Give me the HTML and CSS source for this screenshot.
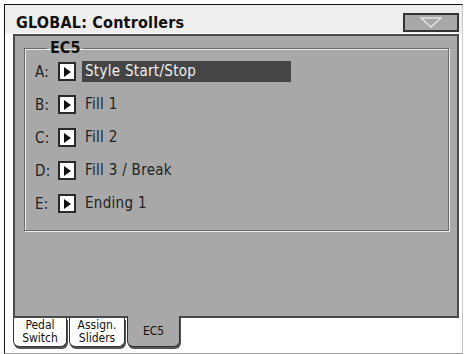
FILE: index.html
```html
<!DOCTYPE html>
<html>
<head>
<meta charset="utf-8">
<link rel="stylesheet" href="styles.css">
</head>
<body>
<div class="window">
  <div class="titlebar">
    <span class="title">GLOBAL: Controllers</span>
    <button class="menu-btn" aria-label="menu">
      <svg width="22" height="11" viewBox="0 0 22 11"><path d="M1 1 L21 1 L11 10 Z" fill="none" stroke="#e4e4e4" stroke-width="1.5"/></svg>
    </button>
  </div>
  <div class="panel">
    <fieldset class="group">
      <legend>EC5</legend>
      <div class="row"><span class="lbl">A:</span><span class="arrow"></span><span class="val sel">Style Start/Stop</span></div>
      <div class="row"><span class="lbl">B:</span><span class="arrow"></span><span class="val">Fill 1</span></div>
      <div class="row"><span class="lbl">C:</span><span class="arrow"></span><span class="val">Fill 2</span></div>
      <div class="row"><span class="lbl">D:</span><span class="arrow"></span><span class="val">Fill 3 / Break</span></div>
      <div class="row"><span class="lbl">E:</span><span class="arrow"></span><span class="val">Ending 1</span></div>
    </fieldset>
  </div>
  <div class="tabs">
    <div class="tab tab-pedal"><span class="tline">Pedal</span><span class="tline">Switch</span></div>
    <div class="tab tab-assign"><span class="tline">Assign.</span><span class="tline">Sliders</span></div>
    <div class="tab tab-ec5 active">EC5</div>
  </div>
</div>
</body>
</html>
```
FILE: styles.css
```css
* { box-sizing: border-box; }
html, body { margin: 0; padding: 0; background: #fff; }
body { width: 465px; height: 354px; overflow: hidden; font-family: "DejaVu Sans Condensed", "DejaVu Sans", sans-serif; color: #222; }

.window {
  margin: 4px 0 0 4px;
  width: 459px;
  height: 350px;
  border-top: 1px solid #111;
  border-left: 1px solid #111;
  border-right: 1px solid #c8c8c8;
  border-bottom: 1px solid #999;
  background: #fff;
  display: flex;
  flex-direction: column;
}

.titlebar {
  height: 28px;
  background: #eeeeee;
  display: flex;
  justify-content: space-between;
  align-items: flex-start;
  padding: 0 3px 0 11px;
}
.title {
  font-weight: bold;
  font-size: 16px;
  line-height: 16px;
  margin-top: 10px;
  color: #111;
  letter-spacing: 0.2px;
}
.menu-btn {
  margin-top: 8px;
  width: 56px;
  height: 19px;
  padding: 0;
  border: 2px solid #333;
  background: #a8a8a8;
  display: flex;
  align-items: center;
  justify-content: center;
}
.menu-btn svg { display: block; }

.panel {
  margin: 1px 3px 0 8px;
  height: 284px;
  background: #a8a8a8;
  border: 2px solid #4a4a4a;
  box-shadow: -1px -1px 0 #fff;
  padding: 0 8px 0 9px;
}

.group {
  margin: 5px 0 0 0;
  padding: 0 0 10px 10px;
  border: 1px solid #6a6a6a;
  box-shadow: inset 1px 1px 0 #ececec, 1px 1px 0 #ececec;
  min-width: 0;
}
.group legend {
  margin-left: 12px;
  padding: 0 3px;
  font-weight: bold;
  font-size: 16px;
  line-height: 14px;
  color: #111;
}

.row {
  height: 33px;
  display: flex;
  align-items: center;
  font-size: 15px;
  letter-spacing: 0.3px;
}
.lbl { width: 23px; color: #222; }
.arrow {
  width: 18px;
  height: 19px;
  border: 2px solid #2a2a2a;
  background: #fff;
  flex: none;
  display: flex;
  align-items: center;
  justify-content: center;
}
.arrow::before {
  content: "";
  border-left: 7px solid #111;
  border-top: 5px solid transparent;
  border-bottom: 5px solid transparent;
  margin-left: 1px;
}
.val {
  margin-left: 6px;
  height: 21px;
  line-height: 21px;
  padding-left: 3px;
  color: #222;
}
.val.sel {
  width: 209px;
  background: #454545;
  color: #f0f0f0;
}

.tabs {
  display: flex;
  padding-left: 8px;
  align-items: flex-start;
}
.tab {
  height: 29px;
  background: #fff;
  border: 1px solid #333;
  border-top: none;
  border-radius: 0 0 6px 6px;
  box-shadow: 1px 2px 0 #555;
  font-size: 12px;
  line-height: 13px;
  text-align: center;
  padding-top: 1px;
  color: #111;
  display: flex;
  flex-direction: column;
  align-items: center;
}
.tline { display: block; height: 13px; }
.tab-pedal { width: 54px; }
.tab-assign { width: 56px; margin-left: 2px; }
.tab-ec5 {
  width: 53px;
  margin-left: 2px;
  margin-top: -2px;
  height: 31px;
  background: #a8a8a8;
  line-height: 31px;
  padding-top: 0;
  font-size: 12px;
}
```
